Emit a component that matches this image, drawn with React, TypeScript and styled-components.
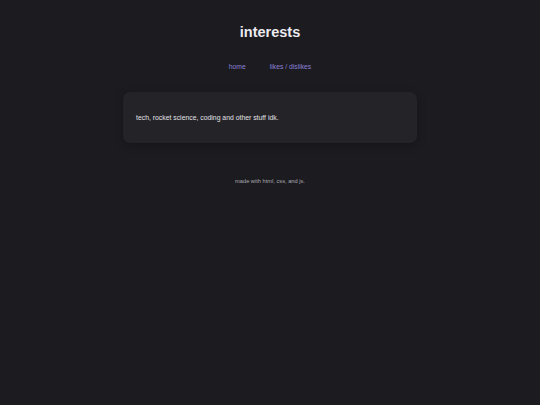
import styled, { createGlobalStyle } from "styled-components";

const GlobalStyle = createGlobalStyle`
  html, body {
    margin: 0;
    padding: 0;
    background: #1c1b20;
    font-family: "Liberation Sans", Arial, sans-serif;
  }
`;

const Page = styled.div`
  min-height: 405px;
  display: flex;
  flex-direction: column;
  align-items: center;
  padding-top: 22px;
  box-sizing: border-box;
`;

const Title = styled.h1`
  margin: 0;
  font-size: 14.5px;
  font-weight: 700;
  color: #ececf0;
  line-height: 20px;
`;

const Nav = styled.nav`
  display: flex;
  gap: 24px;
  margin-top: 20px;
`;

const NavLink = styled.a`
  font-size: 6.8px;
  color: #8a80d6;
  text-decoration: none;
  line-height: 10px;
`;

const Card = styled.section`
  width: 294px;
  height: 51px;
  margin-top: 20px;
  box-sizing: border-box;
  background: #242328;
  border-radius: 7px;
  box-shadow: 0 2px 8px rgba(0, 0, 0, 0.25);
  display: flex;
  align-items: center;
  padding: 0 13px;
`;

const CardText = styled.p`
  margin: 0;
  font-size: 6.85px;
  color: #e2e2e6;
`;

const Footer = styled.footer`
  margin-top: 35px;
  font-size: 5.7px;
  color: #a9a9b0;
`;

export default function App() {
  return (
    <>
      <GlobalStyle />
      <Page>
        <Title>interests</Title>
        <Nav>
          <NavLink href="#">home</NavLink>
          <NavLink href="#">likes / dislikes</NavLink>
        </Nav>
        <Card>
          <CardText>tech, rocket science, coding and other stuff idk.</CardText>
        </Card>
        <Footer>made with html, css, and js.</Footer>
      </Page>
    </>
  );
}
